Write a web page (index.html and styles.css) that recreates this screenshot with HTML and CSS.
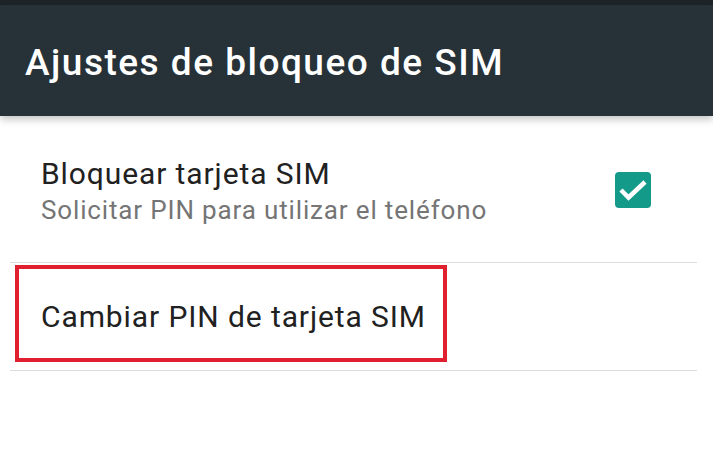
FILE: index.html
```html
<!DOCTYPE html>
<html lang="es">
<head>
    <meta charset="UTF-8">
    <meta name="viewport" content="width=device-width, initial-scale=1.0">
    <title>Ajustes de bloqueo de SIM</title>
    <link rel="stylesheet" href="styles.css">
</head>
<body>
    <div class="status-bar"></div>
    <header class="toolbar">
        <h1>Ajustes de bloqueo de SIM</h1>
    </header>

    <div class="list">
        <div class="item">
            <div class="item-text">
                <div class="item-title">Bloquear tarjeta SIM</div>
                <div class="item-summary">Solicitar PIN para utilizar el teléfono</div>
            </div>
            <div class="checkbox">
                <svg width="36" height="36" viewBox="0 0 36 36">
                    <path d="M6 18 L13.5 25.5 L30 10" fill="none" stroke="#fff" stroke-width="4.5" />
                </svg>
            </div>
        </div>

        <div class="divider"></div>

        <div class="item item-single">
            <div class="highlight">
                <div class="item-title">Cambiar PIN de tarjeta SIM</div>
            </div>
        </div>

        <div class="divider"></div>
    </div>
</body>
</html>
```

FILE: styles.css
```css
body {
    margin: 0;
    background: #fff;
    font-family: Roboto, "Noto Sans", Arial, sans-serif;
    overflow: hidden;
}

.status-bar {
    height: 5px;
    background: #1e2427;
}

.toolbar {
    height: 111px;
    background: #263238;
    display: flex;
    align-items: center;
    padding-left: 25px;
    box-shadow: 0 3px 8px rgba(0, 0, 0, 0.25);
    position: relative;
}

.toolbar h1 {
    margin: 0;
    color: #fff;
    font-size: 37px;
    font-weight: 500;
    letter-spacing: 1.5px;
    padding-top: 4px;
}

.list {
    padding: 0 16px 0 10px;
}

.item {
    display: flex;
    align-items: center;
    height: 146px;
    padding-left: 31px;
    padding-right: 46px;
    box-sizing: border-box;
}

.item-text {
    flex: 1;
    padding-top: 2px;
}

.item-title {
    font-size: 30px;
    letter-spacing: 0.9px;
    color: #212121;
}

.item-summary {
    font-size: 26px;
    letter-spacing: 0.85px;
    color: #757575;
    margin-top: 4px;
}

.checkbox {
    width: 36px;
    height: 36px;
    background: #149a88;
    border-radius: 4px;
    margin-top: 2px;
}

.checkbox svg {
    display: block;
}

.divider {
    height: 1px;
    background: #dcdcdc;
}

.item-single {
    height: 107px;
    padding-left: 5px;
    align-items: flex-start;
}

.highlight {
    width: 432px;
    height: 97px;
    border: 4px solid #e0202e;
    box-sizing: border-box;
    margin-top: 2px;
    display: flex;
    align-items: center;
    padding-left: 22px;
    padding-top: 6px;
}
```
